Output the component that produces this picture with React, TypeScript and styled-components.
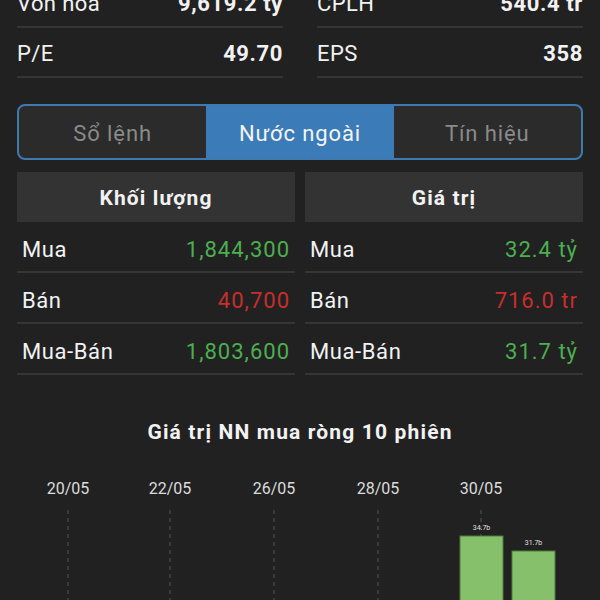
import styled, { createGlobalStyle } from 'styled-components';

const GlobalStyle = createGlobalStyle`
  body {
    margin: 0;
    background: #212121;
    font-family: Roboto, "Noto Sans", sans-serif;
    color: #f2f2f2;
    overflow: hidden;
  }
`;

type Stat = { label: string; value: string };
type Trade = { label: string; value: string; tone: 'up' | 'down' };

const stats: Stat[] = [
  { label: 'Vốn hoá', value: '9,619.2 tỷ' },
  { label: 'CPLH', value: '540.4 tr' },
  { label: 'P/E', value: '49.70' },
  { label: 'EPS', value: '358' },
];

const volume: Trade[] = [
  { label: 'Mua', value: '1,844,300', tone: 'up' },
  { label: 'Bán', value: '40,700', tone: 'down' },
  { label: 'Mua-Bán', value: '1,803,600', tone: 'up' },
];

const amount: Trade[] = [
  { label: 'Mua', value: '32.4 tỷ', tone: 'up' },
  { label: 'Bán', value: '716.0 tr', tone: 'down' },
  { label: 'Mua-Bán', value: '31.7 tỷ', tone: 'up' },
];

const tabs = ['Sổ lệnh', 'Nước ngoài', 'Tín hiệu'];

const dates = [
  { x: 51, label: '20/05' },
  { x: 153, label: '22/05' },
  { x: 257, label: '26/05' },
  { x: 361, label: '28/05' },
  { x: 464, label: '30/05' },
];

const bars = [
  { x: 443, top: 63, label: '34.7b' },
  { x: 495, top: 78, label: '31.7b' },
];

export default function App() {
  return (
    <Page>
      <GlobalStyle />
      <StatGrid>
        {stats.map(s => (
          <StatRow key={s.label}>
            <span>{s.label}</span>
            <StatValue>{s.value}</StatValue>
          </StatRow>
        ))}
      </StatGrid>

      <TabBar>
        {tabs.map((t, i) => (
          <Tab key={t} $active={i === 1}>
            {t}
          </Tab>
        ))}
      </TabBar>

      <Tables>
        <TradeTable title="Khối lượng" rows={volume} />
        <TradeTable title="Giá trị" rows={amount} />
      </Tables>

      <ChartTitle>Giá trị NN mua ròng 10 phiên</ChartTitle>
      <Chart width="566" height="130" viewBox="0 0 566 130">
        {dates.map(d => (
          <g key={d.label}>
            <text x={d.x} y="21" textAnchor="middle" fill="#dcdcdc" fontSize="16" fontFamily="Roboto, sans-serif">
              {d.label}
            </text>
            <line x1={d.x} y1="37" x2={d.x} y2="130" stroke="#555" strokeWidth="1" strokeDasharray="4 4" />
          </g>
        ))}
        {bars.map(b => (
          <g key={b.label}>
            <rect x={b.x} y={b.top} width="43" height={130 - b.top} fill="#86c06b" stroke="#4f7d3c" strokeWidth="1" />
            <text x={b.x + 21.5} y={b.top - 6} textAnchor="middle" fill="#e0e0e0" fontSize="7" fontFamily="Roboto, sans-serif">
              {b.label}
            </text>
          </g>
        ))}
      </Chart>
    </Page>
  );
}

function TradeTable({ title, rows }: { title: string; rows: Trade[] }) {
  return (
    <Column>
      <ColumnHead>{title}</ColumnHead>
      {rows.map(r => (
        <TradeRow key={r.label}>
          <span>{r.label}</span>
          <TradeValue $tone={r.tone}>{r.value}</TradeValue>
        </TradeRow>
      ))}
    </Column>
  );
}

const Page = styled.div`
  padding: 0 17px;
  height: 600px;
  overflow: hidden;
`;

const StatGrid = styled.div`
  display: grid;
  grid-template-columns: 1fr 1fr;
  column-gap: 34px;
  margin-top: -22px;
`;

const StatRow = styled.div`
  display: flex;
  justify-content: space-between;
  align-items: center;
  height: 48px;
  padding-top: 3px;
  box-sizing: border-box;
  height: 50px;
  border-bottom: 2px solid #353535;
  font-size: 22px;
  letter-spacing: 0.4px;
`;

const StatValue = styled.span`
  font-weight: 700;
  letter-spacing: 0.6px;
`;

const TabBar = styled.div`
  display: grid;
  grid-template-columns: 1fr 1fr 1fr;
  margin-top: 26px;
  height: 56px;
  border: 2px solid #3e79b0;
  border-radius: 8px;
  overflow: hidden;
  box-sizing: border-box;
  background: #2b2b2b;
`;

const Tab = styled.div<{ $active: boolean }>`
  display: flex;
  align-items: center;
  justify-content: center;
  padding-top: 2px;
  font-size: 22px;
  letter-spacing: 0.9px;
  color: ${p => (p.$active ? '#f4f4f4' : '#8a8a8a')};
  background: ${p => (p.$active ? '#3b7cb8' : 'transparent')};
`;

const Tables = styled.div`
  display: grid;
  grid-template-columns: 1fr 1fr;
  column-gap: 10px;
  margin-top: 12px;
`;

const Column = styled.div`
  display: flex;
  flex-direction: column;
`;

const ColumnHead = styled.div`
  height: 50px;
  background: #333;
  display: flex;
  align-items: center;
  justify-content: center;
  padding-top: 2px;
  box-sizing: border-box;
  font-size: 21px;
  font-weight: 700;
  letter-spacing: 1.1px;
`;

const TradeRow = styled.div`
  display: flex;
  justify-content: space-between;
  align-items: center;
  height: 51px;
  box-sizing: border-box;
  padding: 5px 5px 0;
  border-bottom: 2px solid #353535;
  font-size: 22px;
  letter-spacing: 0.6px;
`;

const TradeValue = styled.span<{ $tone: 'up' | 'down' }>`
  letter-spacing: 1px;
  color: ${p => (p.$tone === 'up' ? '#4caf50' : '#c62f2b')};
`;

const ChartTitle = styled.div`
  margin-top: 45px;
  text-align: center;
  font-size: 21px;
  font-weight: 700;
  letter-spacing: 1.15px;
`;

const Chart = styled.svg`
  display: block;
  margin-top: 29px;
`;
